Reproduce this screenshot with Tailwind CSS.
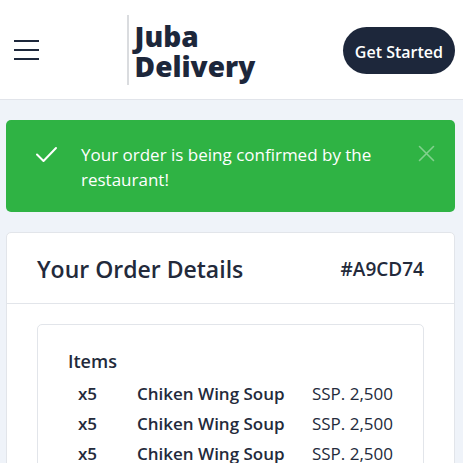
<!DOCTYPE html>
<html lang="en">
<head>
<meta charset="utf-8">
<meta name="viewport" content="width=device-width, initial-scale=1">
<title>Juba Delivery</title>
<script src="https://cdn.jsdelivr.net/npm/@tailwindcss/browser@4"></script>
</head>
<body class="h-screen overflow-hidden bg-[#eff3f9] font-['Open_Sans',sans-serif] text-[#232a3b]">
<header class="flex h-[100px] items-center justify-between border-b border-[#e1e4ea] bg-white pr-2 pl-3.5">
  <button type="button" aria-label="Menu" class="flex w-[25px] flex-col gap-[7px]">
    <span class="h-0.5 w-full bg-[#1d273b]"></span>
    <span class="h-0.5 w-full bg-[#1d273b]"></span>
    <span class="h-0.5 w-full bg-[#1d273b]"></span>
  </button>
  <a href="#" class="border-l-2 border-[#dadcdf] pt-1.5 pb-1 pl-1.5 text-[28px] leading-[30px] font-extrabold text-[#1d273b]"><span class="block">Juba</span><span class="block">Delivery</span></a>
  <button type="button" class="mt-0.5 h-[47px] rounded-full bg-[#1d273b] px-3 pt-0.5 text-[16px] font-semibold text-white">Get Started</button>
</header>
<main class="flex flex-col gap-5 pt-5 pr-2 pl-1.5">
  <div role="alert" class="flex items-start rounded-[5px] bg-[#2fb344] pt-[22px] pr-5 pb-5 pl-7 text-white">
    <svg class="mr-[22px] size-[25px] shrink-0" viewBox="0 0 25 25" fill="none" stroke="currentColor" stroke-width="2" stroke-linecap="round" stroke-linejoin="round" aria-hidden="true"><path d="M3 12.500L9.500 19L22 6"/></svg>
    <p class="flex-1 text-[17px] leading-[25px]">Your order is being confirmed by the restaurant!</p>
    <button type="button" aria-label="Close" class="mt-[3px] text-white/40">
      <svg class="size-[17px]" viewBox="0 0 17 17" fill="none" stroke="currentColor" stroke-width="1.600" stroke-linecap="round" aria-hidden="true"><path d="M1.500 1.500L15.500 15.500M15.500 1.500L1.500 15.500"/></svg>
    </button>
  </div>
  <section class="rounded-[5px] border border-[#e2e5ea] bg-white">
    <div class="flex h-[71px] items-center justify-between border-b border-[#e2e5ea] px-[30px] pt-0.5">
      <h1 class="text-[23px] font-semibold">Your Order Details</h1>
      <span class="text-[19px] font-semibold">#A9CD74</span>
    </div>
    <div class="px-[30px] py-5">
      <div class="rounded-[5px] border border-[#e2e5ea] px-[30px] pt-[21px] pb-5">
        <h2 class="mb-[3px] text-[18px] leading-[30px] font-semibold">Items</h2>
        <table class="w-full text-[17px] leading-[30px]">
          <tbody>
            <tr><td class="w-[69px] p-0 pl-2.5 font-semibold">x5</td><td class="p-0 font-semibold">Chiken Wing Soup</td><td class="p-0 text-right">SSP. 2,500</td></tr>
            <tr><td class="p-0 pl-2.5 font-semibold">x5</td><td class="p-0 font-semibold">Chiken Wing Soup</td><td class="p-0 text-right">SSP. 2,500</td></tr>
            <tr><td class="p-0 pl-2.5 font-semibold">x5</td><td class="p-0 font-semibold">Chiken Wing Soup</td><td class="p-0 text-right">SSP. 2,500</td></tr>
          </tbody>
        </table>
      </div>
    </div>
  </section>
</main>
</body>
</html>
